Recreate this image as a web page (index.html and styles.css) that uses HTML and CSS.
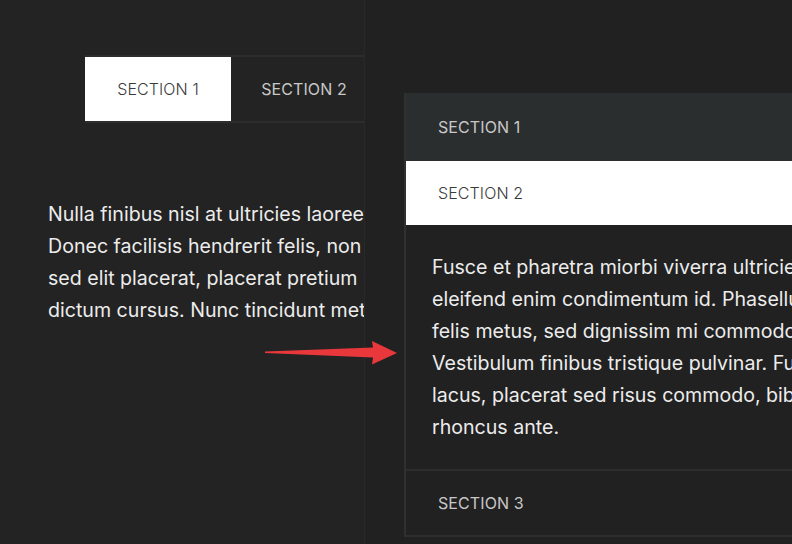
FILE: index.html
```html
<!DOCTYPE html>
<html>
<head>
<meta charset="utf-8">
<link rel="stylesheet" href="styles.css">
</head>
<body>
<div class="page">
  <section class="pane left">
    <div class="tabs">
      <div class="tab active">SECTION 1</div>
      <div class="tab">SECTION 2</div>
      <div class="tab">SECTION 3</div>
    </div>
    <p class="text">Nulla finibus nisl at ultricies laoreet. Aliquam erat volutpat.<br>Donec facilisis hendrerit felis, non tempus lorem vehicula<br>sed elit placerat, placerat pretium ligula sit amet, auctor<br>dictum cursus. Nunc tincidunt metus et ante faucibus.</p>
  </section>
  <section class="pane right">
    <div class="accordion">
      <div class="acc-head first">SECTION 1</div>
      <div class="acc-head open">SECTION 2</div>
      <div class="acc-body">Fusce et pharetra miorbi viverra ultricies. Donec sed<br>eleifend enim condimentum id. Phasellus ullamcorper<br>felis metus, sed dignissim mi commodo in. Integer<br>Vestibulum finibus tristique pulvinar. Fusce tempor<br>lacus, placerat sed risus commodo, bibendum aliquet<br>rhoncus ante.</div>
      <div class="acc-head closed">SECTION 3</div>
    </div>
  </section>
</div>
<svg class="arrow" width="140" height="30" viewBox="260 340 140 30">
  <polygon points="265,351.5 373,347.5 372,341 397,353 372,364.5 373,357.5 265,353" fill="#e8383b"/>
</svg>
</body>
</html>
```

FILE: styles.css
```css
html, body {
  margin: 0;
  padding: 0;
  background: #222222;
}
body {
  width: 792px;
  height: 544px;
  overflow: hidden;
  position: relative;
  font-family: Inter, "Noto Sans", sans-serif;
}
.page {
  display: flex;
  height: 544px;
}
.pane {
  overflow: hidden;
  box-sizing: border-box;
  height: 544px;
}
.left {
  width: 364px;
  flex: none;
  background: #232323;
  padding-top: 55px;
}
.right {
  flex: 1;
  min-width: 0;
  background: #212121;
  border-left: 1px solid #292929;
  padding-top: 93px;
  padding-left: 39px;
}
.tabs {
  display: flex;
  margin-left: 85px;
  width: 600px;
  border-top: 2px solid #2d2d2d;
  border-bottom: 2px solid #2d2d2d;
}
.tab {
  width: 146px;
  height: 64px;
  flex: none;
  display: flex;
  align-items: center;
  justify-content: center;
  font-size: 16px;
  letter-spacing: 0.1px;
  color: #c8c8c8;
  font-weight: 400;
}
.tab.active {
  background: #ffffff;
  color: #3a3a3a;
  font-weight: 300;
}
.text {
  margin: 75px 0 0 48px;
  width: 800px;
  font-size: 19.6px;
  line-height: 32px;
  color: #ececec;
  white-space: nowrap;
}
.accordion {
  width: 900px;
  border-left: 2px solid #303030;
}
.acc-head {
  height: 64px;
  display: flex;
  align-items: center;
  padding-left: 32px;
  font-size: 16px;
  letter-spacing: 0.1px;
  color: #c8c8c8;
}
.acc-head.first {
  height: 68px;
  background: #2b2e2f;
}
.acc-head.open {
  background: #ffffff;
  color: #3a3a3a;
  font-weight: 300;
}
.acc-head.closed {
  border-top: 2px solid #2e2e2e;
  border-bottom: 2px solid #2e2e2e;
}
.acc-body {
  padding: 26px 0 26px 26px;
  font-size: 19.6px;
  line-height: 32px;
  color: #ececec;
  white-space: nowrap;
}
.arrow {
  position: absolute;
  left: 260px;
  top: 340px;
}
```
